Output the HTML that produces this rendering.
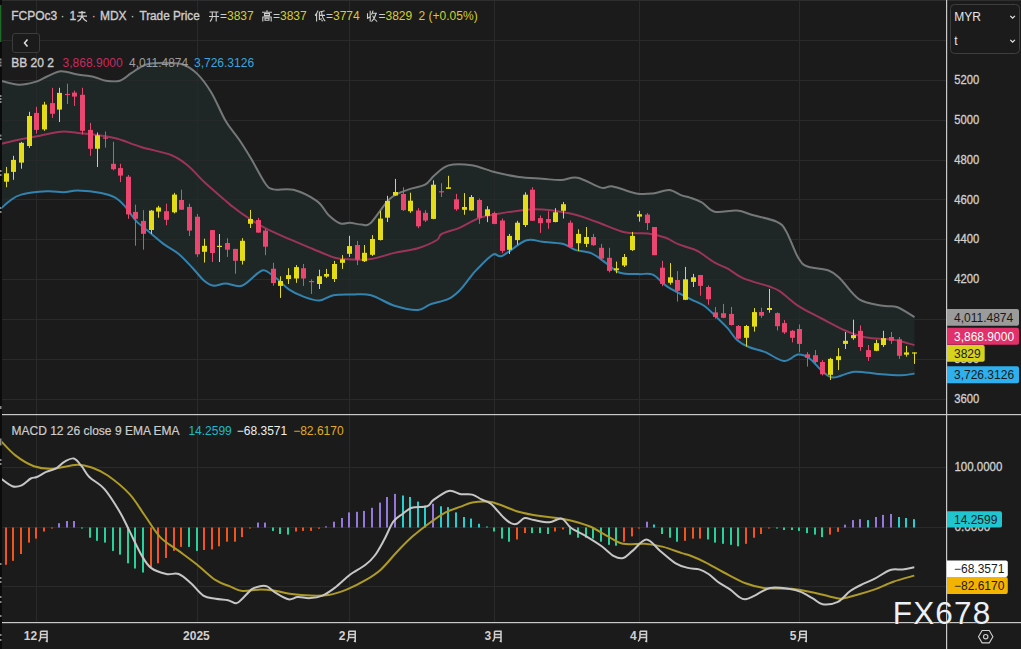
<!DOCTYPE html>
<html><head><meta charset="utf-8"><style>
html,body{margin:0;padding:0;background:#1b1b1b;width:1021px;height:649px;overflow:hidden;}
svg{display:block;}
</style></head><body>
<svg width="1021" height="649" viewBox="0 0 1021 649">
<rect width="1021" height="649" fill="#1b1b1b"/>
<g stroke="#2a2a2a" stroke-width="1"><line x1="0" y1="40.5" x2="946" y2="40.5"/><line x1="0" y1="80.5" x2="946" y2="80.5"/><line x1="0" y1="120.5" x2="946" y2="120.5"/><line x1="0" y1="160.5" x2="946" y2="160.5"/><line x1="0" y1="199.5" x2="946" y2="199.5"/><line x1="0" y1="239.5" x2="946" y2="239.5"/><line x1="0" y1="279.5" x2="946" y2="279.5"/><line x1="0" y1="319.5" x2="946" y2="319.5"/><line x1="0" y1="359.5" x2="946" y2="359.5"/><line x1="0" y1="399.5" x2="946" y2="399.5"/><line x1="0" y1="467.5" x2="946" y2="467.5"/><line x1="0" y1="527.5" x2="946" y2="527.5"/><line x1="0" y1="586.5" x2="946" y2="586.5"/><line x1="36.5" y1="0" x2="36.5" y2="622"/><line x1="197.5" y1="0" x2="197.5" y2="622"/><line x1="349.5" y1="0" x2="349.5" y2="622"/><line x1="494.5" y1="0" x2="494.5" y2="622"/><line x1="639.5" y1="0" x2="639.5" y2="622"/><line x1="799.5" y1="0" x2="799.5" y2="622"/></g>
<path d="M0.0 81.0 C0.4 81.0 -0.7 80.6 2.4 81.2 C5.5 81.8 13.3 84.6 18.8 84.7 C24.3 84.8 30.6 83.3 35.3 81.9 C40.0 80.5 42.7 78.3 47.0 76.5 C51.3 74.7 56.0 71.6 61.1 71.3 C66.2 71.0 72.1 73.7 77.6 74.6 C83.1 75.5 89.3 75.9 94.0 76.9 C98.7 77.9 101.5 80.1 105.8 80.7 C110.1 81.3 115.6 82.0 119.9 80.7 C124.2 79.4 127.3 75.6 131.6 72.9 C135.9 70.2 140.2 66.4 145.7 64.7 C151.2 63.0 158.2 62.8 164.5 62.8 C170.8 62.8 177.9 62.8 183.4 64.7 C188.9 66.6 192.8 69.4 197.5 74.1 C202.2 78.8 206.9 85.1 211.6 92.9 C216.3 100.7 221.1 113.2 225.7 121.1 C230.3 128.9 235.2 133.7 239.4 140.0 C243.7 146.3 246.9 151.6 251.2 158.8 C255.5 166.1 261.6 178.4 265.3 183.5 C269.0 188.6 268.8 188.3 273.5 189.4 C278.2 190.5 286.2 187.9 293.5 189.8 C300.8 191.8 311.1 196.9 317.0 201.1 C322.9 205.3 324.8 211.5 328.7 215.2 C332.6 218.9 337.0 222.2 340.5 223.5 C344.0 224.8 346.4 222.5 349.9 222.7 C353.4 222.9 358.1 224.6 361.6 224.6 C365.1 224.6 366.3 227.0 371.0 222.7 C375.7 218.4 383.6 204.4 389.9 198.8 C396.2 193.2 402.8 191.8 408.7 189.4 C414.6 187.1 420.8 187.0 425.1 184.7 C429.4 182.3 430.6 178.5 434.5 175.3 C438.4 172.1 442.4 167.1 448.6 165.4 C454.8 163.7 464.0 164.2 471.8 165.3 C479.6 166.5 487.5 170.4 495.3 172.3 C503.1 174.2 511.0 175.9 518.8 177.0 C526.6 178.1 535.2 178.2 542.3 178.7 C549.3 179.2 555.2 180.3 561.1 180.1 C567.0 179.9 570.9 176.4 577.5 177.7 C584.1 178.9 595.1 186.1 601.0 187.6 C606.9 189.1 606.9 185.4 612.8 186.4 C618.7 187.4 629.6 192.3 636.3 193.5 C643.0 194.7 647.3 194.1 652.8 193.5 C658.3 192.9 664.5 189.7 669.2 190.0 C673.9 190.3 677.5 193.8 681.0 195.1 C684.5 196.4 686.5 196.4 690.0 197.6 C693.5 198.8 697.7 200.0 701.8 202.3 C705.9 204.7 708.8 210.3 714.7 211.7 C720.6 213.1 730.5 210.0 737.0 210.6 C743.5 211.2 746.8 213.4 753.5 215.3 C760.2 217.2 771.5 219.1 777.0 221.8 C782.5 224.5 782.9 225.7 786.4 231.7 C789.9 237.7 794.6 251.8 798.1 257.6 C801.6 263.4 802.4 264.4 807.5 266.5 C812.6 268.6 823.2 268.4 828.7 270.5 C834.2 272.6 835.3 274.2 840.4 279.0 C845.5 283.8 852.2 294.9 859.3 299.4 C866.4 303.9 876.5 304.5 882.8 305.8 C889.1 307.1 891.6 305.1 896.9 307.0 C902.2 308.9 911.6 315.4 914.5 317.1 L914.5 373.5 C912.4 373.8 907.7 375.1 901.6 375.2 C895.5 375.3 886.0 374.6 878.1 374.0 C870.2 373.4 862.0 371.1 854.5 371.7 C847.0 372.3 838.9 377.7 833.4 377.5 C827.9 377.3 825.5 373.6 821.6 370.5 C817.7 367.4 813.8 361.4 809.9 358.7 C806.0 356.0 802.4 354.1 798.1 354.5 C793.8 354.9 789.5 361.5 784.0 361.1 C778.5 360.7 771.1 354.5 765.2 352.1 C759.3 349.8 753.5 349.0 748.8 347.0 C744.1 345.0 740.5 343.0 737.0 339.9 C733.5 336.8 730.7 331.7 727.6 328.2 C724.5 324.7 722.1 322.5 718.2 318.8 C714.3 315.1 708.8 309.1 704.1 305.8 C699.4 302.5 696.2 302.1 690.0 298.8 C683.8 295.6 673.1 290.3 666.9 286.3 C660.7 282.3 657.5 276.6 652.8 274.6 C648.1 272.6 644.2 274.4 638.7 274.1 C633.2 273.8 625.4 274.6 619.9 272.7 C614.4 270.8 610.4 266.0 605.7 262.8 C601.0 259.6 596.7 255.6 591.6 253.4 C586.5 251.2 579.9 251.5 575.2 249.9 C570.5 248.3 568.9 245.4 563.4 244.0 C557.9 242.6 548.6 242.3 542.3 241.7 C536.0 241.1 532.5 238.2 525.8 240.5 C519.1 242.8 507.8 253.5 502.3 255.8 C496.8 258.2 497.2 252.2 492.9 254.6 C488.6 256.9 480.3 266.1 476.5 269.9 C472.7 273.7 472.8 274.2 470.0 277.6 C467.2 281.0 463.6 286.5 460.0 290.0 C456.4 293.5 453.6 296.4 448.6 298.8 C443.6 301.2 434.9 302.7 429.8 304.6 C424.7 306.5 423.9 309.8 418.0 310.0 C412.1 310.2 402.3 308.3 394.5 305.8 C386.7 303.3 378.1 297.1 371.0 295.2 C363.9 293.3 358.5 294.5 352.2 294.5 C345.9 294.5 338.9 294.2 333.4 295.2 C327.9 296.2 324.4 300.4 319.3 300.6 C314.2 300.8 308.0 298.3 302.9 296.4 C297.8 294.5 293.1 292.3 288.8 289.4 C284.5 286.5 280.9 281.9 277.0 278.8 C273.1 275.7 268.4 271.6 265.3 270.6 C262.2 269.6 262.1 270.4 258.2 272.9 C254.3 275.4 247.2 284.1 241.8 285.8 C236.4 287.6 230.3 283.4 225.7 283.4 C221.0 283.4 217.4 286.2 213.9 285.8 C210.4 285.4 208.0 284.0 204.5 281.1 C201.0 278.2 197.1 272.7 192.8 268.2 C188.5 263.7 183.4 257.9 178.7 254.0 C174.0 250.1 169.2 248.1 164.5 244.6 C159.8 241.1 155.1 236.8 150.4 232.9 C145.7 229.0 140.6 225.6 136.3 221.1 C132.0 216.6 128.1 209.8 124.6 205.9 C121.1 202.0 119.1 199.8 115.2 197.6 C111.3 195.4 107.4 194.1 101.1 192.9 C94.8 191.7 83.9 190.7 77.6 190.6 C71.3 190.5 68.6 192.1 63.5 192.2 C58.4 192.3 54.0 190.9 47.0 191.3 C40.0 191.7 27.5 192.9 21.2 194.6 C14.9 196.2 12.9 198.7 9.4 201.2 C5.9 203.7 1.6 208.0 0.0 209.4 Z" fill="#1e2828" fill-opacity="0.85"/>
<g stroke="#2a2a2a" stroke-width="1" opacity="0.6"><line x1="0" y1="40.5" x2="946" y2="40.5"/><line x1="0" y1="80.5" x2="946" y2="80.5"/><line x1="0" y1="120.5" x2="946" y2="120.5"/><line x1="0" y1="160.5" x2="946" y2="160.5"/><line x1="0" y1="199.5" x2="946" y2="199.5"/><line x1="0" y1="239.5" x2="946" y2="239.5"/><line x1="0" y1="279.5" x2="946" y2="279.5"/><line x1="0" y1="319.5" x2="946" y2="319.5"/><line x1="0" y1="359.5" x2="946" y2="359.5"/><line x1="0" y1="399.5" x2="946" y2="399.5"/><line x1="0" y1="467.5" x2="946" y2="467.5"/><line x1="0" y1="527.5" x2="946" y2="527.5"/><line x1="0" y1="586.5" x2="946" y2="586.5"/><line x1="36.5" y1="0" x2="36.5" y2="622"/><line x1="197.5" y1="0" x2="197.5" y2="622"/><line x1="349.5" y1="0" x2="349.5" y2="622"/><line x1="494.5" y1="0" x2="494.5" y2="622"/><line x1="639.5" y1="0" x2="639.5" y2="622"/><line x1="799.5" y1="0" x2="799.5" y2="622"/></g>
<path d="M0.0 81.0 C0.4 81.0 -0.7 80.6 2.4 81.2 C5.5 81.8 13.3 84.6 18.8 84.7 C24.3 84.8 30.6 83.3 35.3 81.9 C40.0 80.5 42.7 78.3 47.0 76.5 C51.3 74.7 56.0 71.6 61.1 71.3 C66.2 71.0 72.1 73.7 77.6 74.6 C83.1 75.5 89.3 75.9 94.0 76.9 C98.7 77.9 101.5 80.1 105.8 80.7 C110.1 81.3 115.6 82.0 119.9 80.7 C124.2 79.4 127.3 75.6 131.6 72.9 C135.9 70.2 140.2 66.4 145.7 64.7 C151.2 63.0 158.2 62.8 164.5 62.8 C170.8 62.8 177.9 62.8 183.4 64.7 C188.9 66.6 192.8 69.4 197.5 74.1 C202.2 78.8 206.9 85.1 211.6 92.9 C216.3 100.7 221.1 113.2 225.7 121.1 C230.3 128.9 235.2 133.7 239.4 140.0 C243.7 146.3 246.9 151.6 251.2 158.8 C255.5 166.1 261.6 178.4 265.3 183.5 C269.0 188.6 268.8 188.3 273.5 189.4 C278.2 190.5 286.2 187.9 293.5 189.8 C300.8 191.8 311.1 196.9 317.0 201.1 C322.9 205.3 324.8 211.5 328.7 215.2 C332.6 218.9 337.0 222.2 340.5 223.5 C344.0 224.8 346.4 222.5 349.9 222.7 C353.4 222.9 358.1 224.6 361.6 224.6 C365.1 224.6 366.3 227.0 371.0 222.7 C375.7 218.4 383.6 204.4 389.9 198.8 C396.2 193.2 402.8 191.8 408.7 189.4 C414.6 187.1 420.8 187.0 425.1 184.7 C429.4 182.3 430.6 178.5 434.5 175.3 C438.4 172.1 442.4 167.1 448.6 165.4 C454.8 163.7 464.0 164.2 471.8 165.3 C479.6 166.5 487.5 170.4 495.3 172.3 C503.1 174.2 511.0 175.9 518.8 177.0 C526.6 178.1 535.2 178.2 542.3 178.7 C549.3 179.2 555.2 180.3 561.1 180.1 C567.0 179.9 570.9 176.4 577.5 177.7 C584.1 178.9 595.1 186.1 601.0 187.6 C606.9 189.1 606.9 185.4 612.8 186.4 C618.7 187.4 629.6 192.3 636.3 193.5 C643.0 194.7 647.3 194.1 652.8 193.5 C658.3 192.9 664.5 189.7 669.2 190.0 C673.9 190.3 677.5 193.8 681.0 195.1 C684.5 196.4 686.5 196.4 690.0 197.6 C693.5 198.8 697.7 200.0 701.8 202.3 C705.9 204.7 708.8 210.3 714.7 211.7 C720.6 213.1 730.5 210.0 737.0 210.6 C743.5 211.2 746.8 213.4 753.5 215.3 C760.2 217.2 771.5 219.1 777.0 221.8 C782.5 224.5 782.9 225.7 786.4 231.7 C789.9 237.7 794.6 251.8 798.1 257.6 C801.6 263.4 802.4 264.4 807.5 266.5 C812.6 268.6 823.2 268.4 828.7 270.5 C834.2 272.6 835.3 274.2 840.4 279.0 C845.5 283.8 852.2 294.9 859.3 299.4 C866.4 303.9 876.5 304.5 882.8 305.8 C889.1 307.1 891.6 305.1 896.9 307.0 C902.2 308.9 911.6 315.4 914.5 317.1" fill="none" stroke="#747878" stroke-width="2" stroke-linejoin="round"/>
<path d="M0.0 144.0 C3.9 143.1 16.8 140.1 23.5 138.7 C30.2 137.3 33.7 136.9 40.0 135.7 C46.3 134.5 54.8 132.2 61.1 131.7 C67.4 131.2 71.3 132.3 77.6 132.9 C83.9 133.5 92.0 134.2 98.7 135.2 C105.4 136.2 110.5 136.7 117.5 138.7 C124.5 140.7 132.0 144.2 141.0 147.0 C150.0 149.8 163.8 152.1 171.6 155.2 C179.4 158.3 182.5 161.3 188.0 165.8 C193.5 170.3 198.6 176.7 204.5 182.2 C210.4 187.7 219.1 195.0 223.3 198.7 C227.6 202.4 226.5 201.8 230.0 204.6 C233.5 207.3 238.2 211.3 244.1 215.2 C250.0 219.1 257.9 224.2 265.3 228.2 C272.8 232.1 281.0 235.5 288.8 238.9 C296.6 242.3 304.5 245.5 312.3 248.7 C320.1 251.9 329.2 256.2 335.8 258.0 C342.4 259.8 346.3 259.2 352.2 259.4 C358.1 259.6 363.9 260.1 371.0 259.0 C378.1 257.9 386.7 254.7 394.5 252.9 C402.3 251.1 410.9 250.3 418.0 248.2 C425.1 246.0 433.0 242.4 436.9 240.0 C440.8 237.6 437.8 236.1 441.6 234.0 C445.5 231.9 453.8 230.2 460.0 227.6 C466.2 225.0 472.1 220.5 478.8 218.2 C485.5 215.8 490.6 215.0 500.0 213.5 C509.4 212.0 523.5 209.2 535.2 209.2 C547.0 209.2 560.3 211.4 570.5 213.5 C580.7 215.6 587.3 218.6 596.3 221.7 C605.3 224.8 616.0 230.3 624.6 232.3 C633.2 234.3 641.2 232.6 648.1 233.5 C655.0 234.4 660.8 236.0 665.8 237.8 C670.8 239.6 673.5 242.3 678.1 244.2 C682.7 246.1 690.0 247.9 693.6 249.3 C697.2 250.7 696.5 250.3 700.0 252.5 C703.5 254.7 710.2 260.0 714.8 262.7 C719.4 265.4 723.0 266.1 727.8 268.7 C732.6 271.3 736.7 275.5 743.5 278.4 C750.3 281.3 762.4 284.1 768.5 286.3 C774.6 288.5 775.1 288.1 780.0 291.3 C784.9 294.6 791.2 301.3 798.1 305.8 C805.0 310.3 813.8 314.4 821.6 318.5 C829.4 322.6 837.7 327.3 845.1 330.5 C852.5 333.7 858.4 336.1 866.3 337.6 C874.1 339.1 884.2 338.2 892.2 339.5 C900.2 340.8 910.8 344.2 914.5 345.1" fill="none" stroke="#9c3359" stroke-width="2" stroke-linejoin="round"/>
<path d="M0.0 209.4 C1.6 208.0 5.9 203.7 9.4 201.2 C12.9 198.7 14.9 196.2 21.2 194.6 C27.5 192.9 40.0 191.7 47.0 191.3 C54.0 190.9 58.4 192.3 63.5 192.2 C68.6 192.1 71.3 190.5 77.6 190.6 C83.9 190.7 94.8 191.7 101.1 192.9 C107.4 194.1 111.3 195.4 115.2 197.6 C119.1 199.8 121.1 202.0 124.6 205.9 C128.1 209.8 132.0 216.6 136.3 221.1 C140.6 225.6 145.7 229.0 150.4 232.9 C155.1 236.8 159.8 241.1 164.5 244.6 C169.2 248.1 174.0 250.1 178.7 254.0 C183.4 257.9 188.5 263.7 192.8 268.2 C197.1 272.7 201.0 278.2 204.5 281.1 C208.0 284.0 210.4 285.4 213.9 285.8 C217.4 286.2 221.0 283.4 225.7 283.4 C230.3 283.4 236.4 287.6 241.8 285.8 C247.2 284.1 254.3 275.4 258.2 272.9 C262.1 270.4 262.2 269.6 265.3 270.6 C268.4 271.6 273.1 275.7 277.0 278.8 C280.9 281.9 284.5 286.5 288.8 289.4 C293.1 292.3 297.8 294.5 302.9 296.4 C308.0 298.3 314.2 300.8 319.3 300.6 C324.4 300.4 327.9 296.2 333.4 295.2 C338.9 294.2 345.9 294.5 352.2 294.5 C358.5 294.5 363.9 293.3 371.0 295.2 C378.1 297.1 386.7 303.3 394.5 305.8 C402.3 308.3 412.1 310.2 418.0 310.0 C423.9 309.8 424.7 306.5 429.8 304.6 C434.9 302.7 443.6 301.2 448.6 298.8 C453.6 296.4 456.4 293.5 460.0 290.0 C463.6 286.5 467.2 281.0 470.0 277.6 C472.8 274.2 472.7 273.7 476.5 269.9 C480.3 266.1 488.6 256.9 492.9 254.6 C497.2 252.2 496.8 258.2 502.3 255.8 C507.8 253.5 519.1 242.8 525.8 240.5 C532.5 238.2 536.0 241.1 542.3 241.7 C548.6 242.3 557.9 242.6 563.4 244.0 C568.9 245.4 570.5 248.3 575.2 249.9 C579.9 251.5 586.5 251.2 591.6 253.4 C596.7 255.6 601.0 259.6 605.7 262.8 C610.4 266.0 614.4 270.8 619.9 272.7 C625.4 274.6 633.2 273.8 638.7 274.1 C644.2 274.4 648.1 272.6 652.8 274.6 C657.5 276.6 660.7 282.3 666.9 286.3 C673.1 290.3 683.8 295.6 690.0 298.8 C696.2 302.1 699.4 302.5 704.1 305.8 C708.8 309.1 714.3 315.1 718.2 318.8 C722.1 322.5 724.5 324.7 727.6 328.2 C730.7 331.7 733.5 336.8 737.0 339.9 C740.5 343.0 744.1 345.0 748.8 347.0 C753.5 349.0 759.3 349.8 765.2 352.1 C771.1 354.5 778.5 360.7 784.0 361.1 C789.5 361.5 793.8 354.9 798.1 354.5 C802.4 354.1 806.0 356.0 809.9 358.7 C813.8 361.4 817.7 367.4 821.6 370.5 C825.5 373.6 827.9 377.3 833.4 377.5 C838.9 377.7 847.0 372.3 854.5 371.7 C862.0 371.1 870.2 373.4 878.1 374.0 C886.0 374.6 895.5 375.3 901.6 375.2 C907.7 375.1 912.4 373.8 914.5 373.5" fill="none" stroke="#3283b0" stroke-width="2" stroke-linejoin="round"/>
<g><rect x="6" y="166.9" width="1" height="20.3" fill="#e3dc17"/><rect x="4" y="173.3" width="5" height="8.4" fill="#e3dc17"/><rect x="13" y="155.8" width="1" height="24.0" fill="#e3dc17"/><rect x="11" y="159.9" width="5" height="12.0" fill="#e3dc17"/><rect x="21" y="141.9" width="1" height="26.8" fill="#e3dc17"/><rect x="19" y="142.8" width="5" height="19.8" fill="#e3dc17"/><rect x="29" y="111.8" width="1" height="36.0" fill="#e3dc17"/><rect x="27" y="116.0" width="5" height="30.0" fill="#e3dc17"/><rect x="36" y="106.8" width="1" height="26.8" fill="#ea4670"/><rect x="34" y="112.9" width="5" height="17.0" fill="#ea4670"/><rect x="44" y="101.8" width="1" height="29.0" fill="#e3dc17"/><rect x="42" y="104.6" width="5" height="24.8" fill="#e3dc17"/><rect x="52" y="87.8" width="1" height="30.1" fill="#ea4670"/><rect x="50" y="103.1" width="5" height="10.7" fill="#ea4670"/><rect x="59" y="87.8" width="1" height="34.2" fill="#e3dc17"/><rect x="57" y="92.9" width="5" height="16.7" fill="#e3dc17"/><rect x="67" y="83.7" width="1" height="20.3" fill="#ea4670"/><rect x="65" y="93.9" width="5" height="1.2" fill="#ea4670"/><rect x="74" y="90.7" width="1" height="15.2" fill="#ea4670"/><rect x="72" y="92.6" width="5" height="4.0" fill="#ea4670"/><rect x="82" y="87.8" width="1" height="46.7" fill="#ea4670"/><rect x="80" y="94.8" width="5" height="36.0" fill="#ea4670"/><rect x="90" y="122.9" width="1" height="32.9" fill="#ea4670"/><rect x="88" y="129.9" width="5" height="18.9" fill="#ea4670"/><rect x="97" y="132.5" width="1" height="34.5" fill="#e3dc17"/><rect x="95" y="135.3" width="5" height="13.4" fill="#e3dc17"/><rect x="105" y="131.5" width="1" height="16.1" fill="#ea4670"/><rect x="103" y="137.5" width="5" height="1.2" fill="#ea4670"/><rect x="113" y="141.8" width="1" height="28.5" fill="#ea4670"/><rect x="111" y="163.8" width="5" height="5.4" fill="#ea4670"/><rect x="120" y="163.8" width="1" height="18.3" fill="#ea4670"/><rect x="118" y="168.1" width="5" height="7.5" fill="#ea4670"/><rect x="128" y="175.0" width="1" height="43.8" fill="#ea4670"/><rect x="126" y="176.7" width="5" height="37.7" fill="#ea4670"/><rect x="135" y="204.7" width="1" height="41.0" fill="#ea4670"/><rect x="133" y="211.9" width="5" height="6.9" fill="#ea4670"/><rect x="143" y="210.1" width="1" height="39.5" fill="#ea4670"/><rect x="141" y="220.9" width="5" height="12.9" fill="#ea4670"/><rect x="151" y="210.1" width="1" height="23.7" fill="#e3dc17"/><rect x="149" y="210.6" width="5" height="19.4" fill="#e3dc17"/><rect x="158" y="205.8" width="1" height="11.9" fill="#e3dc17"/><rect x="156" y="207.5" width="5" height="4.1" fill="#e3dc17"/><rect x="166" y="203.7" width="1" height="21.5" fill="#ea4670"/><rect x="164" y="211.2" width="5" height="8.6" fill="#ea4670"/><rect x="174" y="192.9" width="1" height="20.5" fill="#e3dc17"/><rect x="172" y="194.6" width="5" height="17.7" fill="#e3dc17"/><rect x="181" y="189.7" width="1" height="20.0" fill="#ea4670"/><rect x="179" y="200.0" width="5" height="9.7" fill="#ea4670"/><rect x="189" y="203.7" width="1" height="32.3" fill="#ea4670"/><rect x="187" y="206.9" width="5" height="23.7" fill="#ea4670"/><rect x="197" y="214.0" width="1" height="42.9" fill="#ea4670"/><rect x="195" y="216.7" width="5" height="37.6" fill="#ea4670"/><rect x="204" y="238.7" width="1" height="23.8" fill="#e3dc17"/><rect x="202" y="245.8" width="5" height="6.0" fill="#e3dc17"/><rect x="212" y="230.1" width="1" height="31.9" fill="#ea4670"/><rect x="210" y="230.1" width="5" height="22.9" fill="#ea4670"/><rect x="219" y="234.0" width="1" height="28.0" fill="#e3dc17"/><rect x="217" y="245.8" width="5" height="1.2" fill="#e3dc17"/><rect x="227" y="238.2" width="1" height="18.7" fill="#ea4670"/><rect x="225" y="243.0" width="5" height="6.7" fill="#ea4670"/><rect x="235" y="248.9" width="1" height="24.9" fill="#ea4670"/><rect x="233" y="248.9" width="5" height="11.9" fill="#ea4670"/><rect x="242" y="238.2" width="1" height="26.3" fill="#e3dc17"/><rect x="240" y="240.8" width="5" height="20.0" fill="#e3dc17"/><rect x="250" y="209.9" width="1" height="18.1" fill="#e3dc17"/><rect x="248" y="219.0" width="5" height="4.8" fill="#e3dc17"/><rect x="258" y="217.9" width="1" height="14.7" fill="#ea4670"/><rect x="256" y="220.0" width="5" height="12.6" fill="#ea4670"/><rect x="265" y="228.9" width="1" height="26.3" fill="#ea4670"/><rect x="263" y="230.6" width="5" height="16.1" fill="#ea4670"/><rect x="273" y="262.8" width="1" height="22.9" fill="#ea4670"/><rect x="271" y="268.7" width="5" height="14.4" fill="#ea4670"/><rect x="280" y="276.3" width="1" height="21.6" fill="#e3dc17"/><rect x="278" y="281.0" width="5" height="4.9" fill="#e3dc17"/><rect x="288" y="268.2" width="1" height="15.8" fill="#e3dc17"/><rect x="286" y="275.1" width="5" height="3.9" fill="#e3dc17"/><rect x="296" y="265.1" width="1" height="17.7" fill="#e3dc17"/><rect x="294" y="267.1" width="5" height="11.4" fill="#e3dc17"/><rect x="303" y="264.0" width="1" height="21.9" fill="#ea4670"/><rect x="301" y="268.2" width="5" height="10.3" fill="#ea4670"/><rect x="311" y="279.4" width="1" height="14.5" fill="#ea4670"/><rect x="309" y="281.0" width="5" height="1.2" fill="#ea4670"/><rect x="319" y="269.7" width="1" height="19.3" fill="#e3dc17"/><rect x="317" y="276.2" width="5" height="7.8" fill="#e3dc17"/><rect x="326" y="268.9" width="1" height="9.0" fill="#e3dc17"/><rect x="324" y="274.0" width="5" height="2.6" fill="#e3dc17"/><rect x="334" y="260.9" width="1" height="21.1" fill="#e3dc17"/><rect x="332" y="264.0" width="5" height="15.0" fill="#e3dc17"/><rect x="342" y="255.1" width="1" height="13.8" fill="#e3dc17"/><rect x="340" y="259.4" width="5" height="3.4" fill="#e3dc17"/><rect x="349" y="235.8" width="1" height="21.1" fill="#e3dc17"/><rect x="347" y="246.1" width="5" height="7.7" fill="#e3dc17"/><rect x="357" y="240.9" width="1" height="24.2" fill="#ea4670"/><rect x="355" y="245.0" width="5" height="14.7" fill="#ea4670"/><rect x="364" y="245.0" width="1" height="17.0" fill="#e3dc17"/><rect x="362" y="252.8" width="5" height="8.4" fill="#e3dc17"/><rect x="372" y="235.1" width="1" height="20.8" fill="#e3dc17"/><rect x="370" y="239.0" width="5" height="15.8" fill="#e3dc17"/><rect x="380" y="210.9" width="1" height="29.6" fill="#e3dc17"/><rect x="378" y="218.6" width="5" height="21.4" fill="#e3dc17"/><rect x="387" y="195.8" width="1" height="26.2" fill="#e3dc17"/><rect x="385" y="200.9" width="5" height="16.8" fill="#e3dc17"/><rect x="395" y="178.9" width="1" height="16.6" fill="#e3dc17"/><rect x="393" y="192.0" width="5" height="3.5" fill="#e3dc17"/><rect x="403" y="187.3" width="1" height="23.6" fill="#ea4670"/><rect x="401" y="194.0" width="5" height="16.1" fill="#ea4670"/><rect x="410" y="192.7" width="1" height="20.1" fill="#e3dc17"/><rect x="408" y="200.7" width="5" height="10.5" fill="#e3dc17"/><rect x="418" y="208.1" width="1" height="20.1" fill="#ea4670"/><rect x="416" y="210.5" width="5" height="15.8" fill="#ea4670"/><rect x="425" y="210.1" width="1" height="11.9" fill="#ea4670"/><rect x="423" y="212.8" width="5" height="7.7" fill="#ea4670"/><rect x="433" y="180.4" width="1" height="38.8" fill="#e3dc17"/><rect x="431" y="184.7" width="5" height="34.2" fill="#e3dc17"/><rect x="441" y="183.2" width="1" height="13.8" fill="#ea4670"/><rect x="439" y="191.2" width="5" height="1.2" fill="#ea4670"/><rect x="448" y="175.8" width="1" height="13.1" fill="#e3dc17"/><rect x="446" y="187.3" width="5" height="1.6" fill="#e3dc17"/><rect x="456" y="193.9" width="1" height="16.9" fill="#ea4670"/><rect x="454" y="199.3" width="5" height="10.0" fill="#ea4670"/><rect x="464" y="193.1" width="1" height="21.6" fill="#e3dc17"/><rect x="462" y="207.0" width="5" height="2.8" fill="#e3dc17"/><rect x="471" y="195.0" width="1" height="15.8" fill="#e3dc17"/><rect x="469" y="197.0" width="5" height="13.4" fill="#e3dc17"/><rect x="479" y="198.5" width="1" height="25.4" fill="#ea4670"/><rect x="477" y="200.0" width="5" height="17.8" fill="#ea4670"/><rect x="487" y="206.2" width="1" height="15.9" fill="#e3dc17"/><rect x="485" y="209.3" width="5" height="6.6" fill="#e3dc17"/><rect x="494" y="211.6" width="1" height="12.6" fill="#ea4670"/><rect x="492" y="213.1" width="5" height="10.8" fill="#ea4670"/><rect x="502" y="218.5" width="1" height="34.7" fill="#ea4670"/><rect x="500" y="220.5" width="5" height="30.4" fill="#ea4670"/><rect x="509" y="233.9" width="1" height="20.1" fill="#e3dc17"/><rect x="507" y="235.9" width="5" height="13.9" fill="#e3dc17"/><rect x="517" y="220.8" width="1" height="23.9" fill="#e3dc17"/><rect x="515" y="222.7" width="5" height="17.4" fill="#e3dc17"/><rect x="525" y="192.3" width="1" height="34.7" fill="#e3dc17"/><rect x="523" y="194.7" width="5" height="30.3" fill="#e3dc17"/><rect x="532" y="187.3" width="1" height="33.5" fill="#ea4670"/><rect x="530" y="189.7" width="5" height="31.1" fill="#ea4670"/><rect x="540" y="215.5" width="1" height="17.4" fill="#ea4670"/><rect x="538" y="218.1" width="5" height="5.1" fill="#ea4670"/><rect x="548" y="211.3" width="1" height="17.5" fill="#ea4670"/><rect x="546" y="219.0" width="5" height="3.7" fill="#ea4670"/><rect x="555" y="208.2" width="1" height="14.2" fill="#e3dc17"/><rect x="553" y="212.3" width="5" height="9.7" fill="#e3dc17"/><rect x="563" y="202.0" width="1" height="16.5" fill="#e3dc17"/><rect x="561" y="204.2" width="5" height="6.6" fill="#e3dc17"/><rect x="570" y="220.5" width="1" height="27.3" fill="#ea4670"/><rect x="568" y="222.7" width="5" height="24.3" fill="#ea4670"/><rect x="578" y="229.3" width="1" height="21.6" fill="#e3dc17"/><rect x="576" y="233.9" width="5" height="9.3" fill="#e3dc17"/><rect x="586" y="227.0" width="1" height="20.0" fill="#e3dc17"/><rect x="584" y="237.0" width="5" height="6.9" fill="#e3dc17"/><rect x="593" y="233.9" width="1" height="11.9" fill="#ea4670"/><rect x="591" y="237.0" width="5" height="8.2" fill="#ea4670"/><rect x="601" y="243.9" width="1" height="16.2" fill="#ea4670"/><rect x="599" y="247.8" width="5" height="10.8" fill="#ea4670"/><rect x="609" y="247.8" width="1" height="24.6" fill="#ea4670"/><rect x="607" y="257.8" width="5" height="13.1" fill="#ea4670"/><rect x="616" y="261.6" width="1" height="11.6" fill="#e3dc17"/><rect x="614" y="268.3" width="5" height="1.8" fill="#e3dc17"/><rect x="624" y="254.0" width="1" height="13.0" fill="#e3dc17"/><rect x="622" y="257.0" width="5" height="8.5" fill="#e3dc17"/><rect x="632" y="231.9" width="1" height="19.0" fill="#e3dc17"/><rect x="630" y="235.9" width="5" height="14.2" fill="#e3dc17"/><rect x="639" y="210.8" width="1" height="10.8" fill="#e3dc17"/><rect x="637" y="214.2" width="5" height="2.4" fill="#e3dc17"/><rect x="647" y="213.1" width="1" height="16.9" fill="#ea4670"/><rect x="645" y="214.6" width="5" height="8.5" fill="#ea4670"/><rect x="654" y="227.0" width="1" height="28.2" fill="#ea4670"/><rect x="652" y="227.0" width="5" height="28.2" fill="#ea4670"/><rect x="662" y="260.8" width="1" height="25.4" fill="#ea4670"/><rect x="660" y="267.7" width="5" height="16.2" fill="#ea4670"/><rect x="670" y="263.1" width="1" height="21.6" fill="#e3dc17"/><rect x="668" y="277.3" width="5" height="5.5" fill="#e3dc17"/><rect x="677" y="271.1" width="1" height="30.5" fill="#ea4670"/><rect x="675" y="280.0" width="5" height="10.8" fill="#ea4670"/><rect x="685" y="266.9" width="1" height="33.2" fill="#e3dc17"/><rect x="683" y="279.3" width="5" height="20.5" fill="#e3dc17"/><rect x="693" y="273.9" width="1" height="13.1" fill="#e3dc17"/><rect x="691" y="277.3" width="5" height="4.6" fill="#e3dc17"/><rect x="700" y="275.0" width="1" height="20.7" fill="#ea4670"/><rect x="698" y="275.0" width="5" height="10.9" fill="#ea4670"/><rect x="708" y="285.4" width="1" height="19.3" fill="#ea4670"/><rect x="706" y="287.0" width="5" height="12.3" fill="#ea4670"/><rect x="715" y="307.0" width="1" height="11.6" fill="#ea4670"/><rect x="713" y="312.4" width="5" height="4.6" fill="#ea4670"/><rect x="723" y="303.9" width="1" height="14.3" fill="#ea4670"/><rect x="721" y="313.2" width="5" height="4.6" fill="#ea4670"/><rect x="731" y="307.0" width="1" height="18.5" fill="#ea4670"/><rect x="729" y="313.9" width="5" height="11.1" fill="#ea4670"/><rect x="738" y="325.0" width="1" height="14.4" fill="#ea4670"/><rect x="736" y="326.0" width="5" height="12.6" fill="#ea4670"/><rect x="746" y="325.0" width="1" height="21.6" fill="#e3dc17"/><rect x="744" y="326.0" width="5" height="11.8" fill="#e3dc17"/><rect x="754" y="308.1" width="1" height="23.5" fill="#e3dc17"/><rect x="752" y="312.1" width="5" height="14.5" fill="#e3dc17"/><rect x="761" y="307.7" width="1" height="10.1" fill="#ea4670"/><rect x="759" y="312.0" width="5" height="3.7" fill="#ea4670"/><rect x="769" y="288.9" width="1" height="23.8" fill="#e3dc17"/><rect x="767" y="308.0" width="5" height="2.0" fill="#e3dc17"/><rect x="777" y="312.4" width="1" height="18.1" fill="#ea4670"/><rect x="775" y="313.1" width="5" height="13.1" fill="#ea4670"/><rect x="784" y="320.1" width="1" height="13.8" fill="#ea4670"/><rect x="782" y="323.1" width="5" height="9.3" fill="#ea4670"/><rect x="792" y="330.0" width="1" height="12.4" fill="#ea4670"/><rect x="790" y="330.8" width="5" height="7.0" fill="#ea4670"/><rect x="799" y="324.4" width="1" height="28.0" fill="#ea4670"/><rect x="797" y="329.0" width="5" height="14.9" fill="#ea4670"/><rect x="807" y="352.1" width="1" height="14.5" fill="#ea4670"/><rect x="805" y="354.3" width="5" height="3.5" fill="#ea4670"/><rect x="815" y="350.1" width="1" height="13.1" fill="#ea4670"/><rect x="813" y="355.2" width="5" height="6.8" fill="#ea4670"/><rect x="822" y="360.1" width="1" height="15.4" fill="#ea4670"/><rect x="820" y="362.0" width="5" height="12.3" fill="#ea4670"/><rect x="830" y="357.8" width="1" height="22.2" fill="#e3dc17"/><rect x="828" y="358.9" width="5" height="15.9" fill="#e3dc17"/><rect x="838" y="348.1" width="1" height="22.0" fill="#e3dc17"/><rect x="836" y="356.2" width="5" height="3.9" fill="#e3dc17"/><rect x="845" y="332.0" width="1" height="17.0" fill="#e3dc17"/><rect x="843" y="340.8" width="5" height="3.1" fill="#e3dc17"/><rect x="853" y="319.7" width="1" height="20.1" fill="#e3dc17"/><rect x="851" y="335.1" width="5" height="3.1" fill="#e3dc17"/><rect x="860" y="325.4" width="1" height="25.4" fill="#ea4670"/><rect x="858" y="330.8" width="5" height="16.2" fill="#ea4670"/><rect x="868" y="345.0" width="1" height="15.9" fill="#ea4670"/><rect x="866" y="350.1" width="5" height="6.9" fill="#ea4670"/><rect x="876" y="339.8" width="1" height="11.4" fill="#e3dc17"/><rect x="874" y="343.1" width="5" height="7.7" fill="#e3dc17"/><rect x="883" y="330.8" width="1" height="16.2" fill="#e3dc17"/><rect x="881" y="338.2" width="5" height="6.8" fill="#e3dc17"/><rect x="891" y="332.0" width="1" height="11.9" fill="#ea4670"/><rect x="889" y="337.0" width="5" height="3.8" fill="#ea4670"/><rect x="899" y="337.0" width="1" height="21.9" fill="#ea4670"/><rect x="897" y="339.3" width="5" height="16.5" fill="#ea4670"/><rect x="906" y="345.9" width="1" height="10.8" fill="#e3dc17"/><rect x="904" y="352.4" width="5" height="2.3" fill="#e3dc17"/><rect x="914" y="352.4" width="1" height="11.5" fill="#e3dc17"/><rect x="912" y="352.4" width="5" height="1.2" fill="#e3dc17"/></g>
<g><rect x="5" y="527.5" width="2" height="37.3" fill="#f2541b"/><rect x="12" y="527.5" width="2" height="33.3" fill="#f2541b"/><rect x="20" y="527.5" width="2" height="26.5" fill="#f2541b"/><rect x="28" y="527.5" width="2" height="15.1" fill="#f2541b"/><rect x="35" y="527.5" width="2" height="11.1" fill="#f2541b"/><rect x="43" y="527.5" width="2" height="4.0" fill="#f2541b"/><rect x="51" y="527.5" width="2" height="1.0" fill="#f2541b"/><rect x="58" y="523.2" width="2" height="4.3" fill="#9677de"/><rect x="66" y="521.0" width="2" height="6.5" fill="#9677de"/><rect x="73" y="521.0" width="2" height="6.5" fill="#9677de"/><rect x="81" y="527.5" width="2" height="1.0" fill="#24d39a"/><rect x="89" y="527.5" width="2" height="10.2" fill="#24d39a"/><rect x="96" y="527.5" width="2" height="13.3" fill="#24d39a"/><rect x="104" y="527.5" width="2" height="15.1" fill="#24d39a"/><rect x="112" y="527.5" width="2" height="23.4" fill="#24d39a"/><rect x="119" y="527.5" width="2" height="27.1" fill="#24d39a"/><rect x="127" y="527.5" width="2" height="35.8" fill="#24d39a"/><rect x="134" y="527.5" width="2" height="41.0" fill="#24d39a"/><rect x="142" y="527.5" width="2" height="45.0" fill="#24d39a"/><rect x="150" y="527.5" width="2" height="40.4" fill="#f2541b"/><rect x="157" y="527.5" width="2" height="35.8" fill="#f2541b"/><rect x="165" y="527.5" width="2" height="30.5" fill="#f2541b"/><rect x="173" y="527.5" width="2" height="23.4" fill="#f2541b"/><rect x="180" y="527.5" width="2" height="19.4" fill="#f2541b"/><rect x="188" y="527.5" width="2" height="19.4" fill="#24d39a"/><rect x="196" y="527.5" width="2" height="23.4" fill="#24d39a"/><rect x="203" y="527.5" width="2" height="22.5" fill="#f2541b"/><rect x="211" y="527.5" width="2" height="21.9" fill="#f2541b"/><rect x="218" y="527.5" width="2" height="18.8" fill="#f2541b"/><rect x="226" y="527.5" width="2" height="14.2" fill="#f2541b"/><rect x="234" y="527.5" width="2" height="14.2" fill="#f2541b"/><rect x="241" y="527.5" width="2" height="9.6" fill="#f2541b"/><rect x="249" y="527.5" width="2" height="1.0" fill="#f2541b"/><rect x="257" y="522.6" width="2" height="4.9" fill="#9677de"/><rect x="264" y="522.6" width="2" height="4.9" fill="#9677de"/><rect x="272" y="527.5" width="2" height="3.4" fill="#24d39a"/><rect x="279" y="527.5" width="2" height="6.5" fill="#24d39a"/><rect x="287" y="527.5" width="2" height="7.1" fill="#24d39a"/><rect x="295" y="527.5" width="2" height="4.0" fill="#f2541b"/><rect x="302" y="527.5" width="2" height="3.4" fill="#f2541b"/><rect x="310" y="527.5" width="2" height="3.4" fill="#f2541b"/><rect x="318" y="527.5" width="2" height="1.2" fill="#f2541b"/><rect x="325" y="526.3" width="2" height="1.2" fill="#9677de"/><rect x="333" y="521.7" width="2" height="5.8" fill="#9677de"/><rect x="341" y="518.0" width="2" height="9.5" fill="#9677de"/><rect x="348" y="512.4" width="2" height="15.1" fill="#9677de"/><rect x="356" y="511.8" width="2" height="15.7" fill="#9677de"/><rect x="363" y="510.9" width="2" height="16.6" fill="#9677de"/><rect x="371" y="507.8" width="2" height="19.7" fill="#9677de"/><rect x="379" y="502.6" width="2" height="24.9" fill="#9677de"/><rect x="386" y="497.0" width="2" height="30.5" fill="#9677de"/><rect x="394" y="493.9" width="2" height="33.6" fill="#9677de"/><rect x="402" y="495.5" width="2" height="32.0" fill="#23d0cf"/><rect x="409" y="497.0" width="2" height="30.5" fill="#23d0cf"/><rect x="417" y="501.6" width="2" height="25.9" fill="#23d0cf"/><rect x="424" y="505.6" width="2" height="21.9" fill="#23d0cf"/><rect x="432" y="503.8" width="2" height="23.7" fill="#9677de"/><rect x="440" y="506.3" width="2" height="21.2" fill="#23d0cf"/><rect x="447" y="507.2" width="2" height="20.3" fill="#23d0cf"/><rect x="455" y="512.4" width="2" height="15.1" fill="#23d0cf"/><rect x="463" y="517.0" width="2" height="10.5" fill="#23d0cf"/><rect x="470" y="518.6" width="2" height="8.9" fill="#23d0cf"/><rect x="478" y="523.8" width="2" height="3.7" fill="#23d0cf"/><rect x="486" y="526.5" width="2" height="1.0" fill="#23d0cf"/><rect x="493" y="527.5" width="2" height="4.0" fill="#24d39a"/><rect x="501" y="527.5" width="2" height="11.1" fill="#24d39a"/><rect x="508" y="527.5" width="2" height="14.2" fill="#24d39a"/><rect x="516" y="527.5" width="2" height="12.0" fill="#f2541b"/><rect x="524" y="527.5" width="2" height="5.6" fill="#f2541b"/><rect x="531" y="527.5" width="2" height="5.6" fill="#24d39a"/><rect x="539" y="527.5" width="2" height="5.6" fill="#24d39a"/><rect x="547" y="527.5" width="2" height="6.5" fill="#24d39a"/><rect x="554" y="527.5" width="2" height="4.0" fill="#f2541b"/><rect x="562" y="527.5" width="2" height="1.9" fill="#f2541b"/><rect x="569" y="527.5" width="2" height="7.1" fill="#24d39a"/><rect x="577" y="527.5" width="2" height="10.2" fill="#24d39a"/><rect x="585" y="527.5" width="2" height="10.2" fill="#24d39a"/><rect x="592" y="527.5" width="2" height="11.1" fill="#24d39a"/><rect x="600" y="527.5" width="2" height="14.2" fill="#24d39a"/><rect x="608" y="527.5" width="2" height="17.3" fill="#24d39a"/><rect x="615" y="527.5" width="2" height="18.2" fill="#24d39a"/><rect x="623" y="527.5" width="2" height="14.2" fill="#f2541b"/><rect x="631" y="527.5" width="2" height="8.9" fill="#f2541b"/><rect x="638" y="527.5" width="2" height="1.0" fill="#f2541b"/><rect x="646" y="521.7" width="2" height="5.8" fill="#9677de"/><rect x="653" y="524.5" width="2" height="3.0" fill="#23d0cf"/><rect x="661" y="527.5" width="2" height="6.5" fill="#24d39a"/><rect x="669" y="527.5" width="2" height="10.2" fill="#24d39a"/><rect x="676" y="527.5" width="2" height="14.2" fill="#24d39a"/><rect x="684" y="527.5" width="2" height="13.3" fill="#f2541b"/><rect x="692" y="527.5" width="2" height="11.1" fill="#f2541b"/><rect x="699" y="527.5" width="2" height="11.1" fill="#f2541b"/><rect x="707" y="527.5" width="2" height="12.0" fill="#24d39a"/><rect x="714" y="527.5" width="2" height="15.1" fill="#24d39a"/><rect x="722" y="527.5" width="2" height="16.3" fill="#24d39a"/><rect x="730" y="527.5" width="2" height="17.3" fill="#24d39a"/><rect x="737" y="527.5" width="2" height="18.8" fill="#24d39a"/><rect x="745" y="527.5" width="2" height="16.3" fill="#f2541b"/><rect x="753" y="527.5" width="2" height="10.2" fill="#f2541b"/><rect x="760" y="527.5" width="2" height="6.5" fill="#f2541b"/><rect x="768" y="527.5" width="2" height="1.0" fill="#f2541b"/><rect x="776" y="527.5" width="2" height="1.0" fill="#24d39a"/><rect x="783" y="527.5" width="2" height="2.5" fill="#24d39a"/><rect x="791" y="527.5" width="2" height="2.5" fill="#24d39a"/><rect x="798" y="527.5" width="2" height="3.4" fill="#24d39a"/><rect x="806" y="527.5" width="2" height="5.6" fill="#24d39a"/><rect x="814" y="527.5" width="2" height="7.1" fill="#24d39a"/><rect x="821" y="527.5" width="2" height="9.6" fill="#24d39a"/><rect x="829" y="527.5" width="2" height="7.1" fill="#f2541b"/><rect x="837" y="527.5" width="2" height="4.3" fill="#f2541b"/><rect x="844" y="524.7" width="2" height="2.8" fill="#9677de"/><rect x="852" y="520.1" width="2" height="7.4" fill="#9677de"/><rect x="859" y="519.2" width="2" height="8.3" fill="#9677de"/><rect x="867" y="520.1" width="2" height="7.4" fill="#23d0cf"/><rect x="875" y="517.0" width="2" height="10.5" fill="#9677de"/><rect x="882" y="514.9" width="2" height="12.6" fill="#9677de"/><rect x="890" y="514.0" width="2" height="13.5" fill="#9677de"/><rect x="898" y="517.0" width="2" height="10.5" fill="#23d0cf"/><rect x="905" y="518.0" width="2" height="9.5" fill="#23d0cf"/><rect x="913" y="519.2" width="2" height="8.3" fill="#23d0cf"/></g>
<path d="M0.0 440.0 C2.6 442.6 9.8 451.0 15.4 455.4 C21.1 459.8 27.7 464.0 33.9 466.2 C40.1 468.4 45.2 468.9 52.4 468.7 C59.6 468.4 70.3 464.9 77.0 464.7 C83.7 464.5 87.3 465.9 92.4 467.7 C97.5 469.5 101.6 471.1 107.8 475.5 C114.0 479.9 123.2 487.2 129.4 493.9 C135.6 500.6 139.7 508.3 144.8 515.5 C149.9 522.7 154.5 531.2 160.2 537.1 C165.8 543.0 172.5 546.3 178.7 550.9 C184.9 555.5 191.0 559.9 197.2 564.8 C203.4 569.7 210.2 576.6 215.7 580.2 C221.2 583.8 225.6 584.6 230.0 586.4 C234.4 588.2 237.2 590.5 242.3 591.0 C247.4 591.5 255.2 589.4 260.8 589.4 C266.4 589.4 271.1 590.2 276.2 591.0 C281.3 591.8 286.0 593.3 291.6 594.1 C297.2 594.9 303.9 595.5 310.1 595.6 C316.3 595.8 322.4 596.0 328.6 595.0 C334.8 594.0 341.0 591.9 347.1 589.4 C353.2 586.9 359.9 583.5 365.5 580.2 C371.1 576.9 375.9 574.0 381.0 569.4 C386.1 564.8 391.3 557.9 396.4 552.5 C401.5 547.1 406.7 541.7 411.8 537.1 C416.9 532.5 421.6 528.8 427.2 524.7 C432.8 520.6 440.1 515.4 445.6 512.4 C451.1 509.4 455.6 508.5 460.0 506.9 C464.4 505.3 467.7 503.5 472.3 502.6 C476.9 501.7 483.1 501.2 487.7 501.6 C492.3 502.0 494.9 503.0 500.0 504.7 C505.1 506.4 511.8 509.9 518.5 511.8 C525.2 513.7 532.4 514.9 540.1 516.1 C547.8 517.3 556.5 517.5 564.7 519.2 C572.9 520.9 582.2 523.4 589.4 526.3 C596.6 529.2 602.2 533.5 607.9 536.4 C613.5 539.3 617.1 542.6 623.3 543.8 C629.4 545.0 638.1 543.3 644.8 543.8 C651.5 544.3 657.1 545.3 663.3 546.9 C669.5 548.5 677.3 551.7 681.8 553.1 C686.2 554.5 686.1 554.0 690.0 555.5 C693.9 557.0 699.8 559.5 705.4 562.3 C711.0 565.1 717.2 569.0 723.9 572.5 C730.6 576.0 738.8 580.7 745.5 583.3 C752.2 585.9 756.2 587.0 763.9 587.9 C771.6 588.8 783.5 588.0 791.7 588.8 C799.9 589.6 807.1 591.3 813.2 592.5 C819.4 593.7 824.0 595.2 828.6 596.2 C833.2 597.2 836.4 598.9 841.0 598.7 C845.6 598.5 850.8 596.5 856.4 595.0 C862.0 593.5 868.6 591.6 874.8 589.4 C880.9 587.2 886.7 584.0 893.3 581.7 C899.9 579.4 910.8 576.6 914.3 575.6" fill="none" stroke="#ae9a26" stroke-width="2" stroke-linejoin="round"/>
<path d="M0.0 477.9 C2.1 479.3 8.7 485.0 12.3 486.2 C15.9 487.4 18.5 486.6 21.6 485.3 C24.7 484.0 28.2 479.9 30.8 478.5 C33.4 477.1 34.4 478.1 37.0 477.0 C39.6 475.9 43.1 473.2 46.2 471.8 C49.3 470.4 52.4 470.4 55.5 468.7 C58.6 467.0 61.6 463.3 64.7 461.6 C67.8 459.9 71.1 457.7 73.9 458.5 C76.7 459.3 79.0 463.1 81.6 466.2 C84.2 469.3 85.4 473.1 89.3 477.0 C93.2 480.9 99.6 483.4 104.7 489.3 C109.8 495.2 116.0 505.5 120.1 512.4 C124.2 519.3 125.8 523.7 129.4 530.9 C133.0 538.1 138.1 549.3 141.7 555.5 C145.3 561.7 146.9 564.8 151.0 567.9 C155.1 571.0 161.8 573.0 166.4 574.0 C171.0 575.0 174.6 572.5 178.7 574.0 C182.8 575.5 186.9 579.7 191.0 583.3 C195.1 586.9 199.2 593.0 203.3 595.6 C207.4 598.2 211.6 597.9 215.7 598.7 C219.8 599.5 224.6 599.4 228.0 600.2 C231.4 601.0 233.8 603.5 236.2 603.3 C238.6 603.0 239.7 601.0 242.3 598.7 C244.9 596.4 248.8 591.5 251.6 589.4 C254.4 587.3 256.7 586.9 259.3 586.4 C261.9 585.9 264.2 585.3 267.0 586.4 C269.8 587.5 272.6 591.0 276.2 593.1 C279.8 595.2 284.9 598.6 288.5 599.3 C292.1 600.0 294.2 597.3 297.8 597.1 C301.4 596.9 306.0 598.4 310.1 598.1 C314.2 597.9 318.3 597.3 322.4 595.6 C326.5 593.9 330.6 591.0 334.7 587.9 C338.8 584.8 344.0 579.7 347.1 577.1 C350.2 574.5 350.1 574.5 353.2 572.5 C356.3 570.5 361.9 567.6 365.5 564.8 C369.1 562.0 371.7 559.6 374.8 555.5 C377.9 551.4 380.9 545.7 384.0 540.1 C387.1 534.5 390.2 526.1 393.3 521.7 C396.4 517.4 399.4 516.3 402.5 514.0 C405.6 511.7 407.7 509.1 411.8 507.8 C415.9 506.5 423.6 507.6 427.2 506.3 C430.8 505.0 429.7 502.7 433.3 500.1 C436.9 497.5 444.1 491.9 448.7 490.9 C453.3 489.9 457.1 493.6 461.0 494.2 C464.9 494.8 468.9 493.7 472.3 494.6 C475.7 495.5 478.5 498.0 481.6 499.5 C484.7 501.0 487.2 500.9 490.8 503.8 C494.4 506.7 499.8 513.8 503.1 517.0 C506.4 520.2 508.5 522.1 510.8 523.2 C513.1 524.3 514.7 524.7 517.0 523.8 C519.3 522.9 521.9 518.6 524.7 518.0 C527.5 517.4 529.8 519.4 533.9 520.1 C538.0 520.8 544.7 522.5 549.3 522.3 C553.9 522.0 558.1 517.7 561.7 518.6 C565.3 519.5 566.8 524.8 570.9 527.8 C575.0 530.8 581.2 533.3 586.3 536.4 C591.4 539.5 597.1 543.0 601.7 546.3 C606.3 549.6 610.4 554.2 614.0 556.2 C617.6 558.2 620.2 558.9 623.3 558.0 C626.4 557.1 628.6 554.0 632.5 550.9 C636.4 547.8 641.8 539.5 646.4 539.5 C651.0 539.5 655.3 546.9 660.2 550.9 C665.1 554.9 671.1 560.5 675.7 563.3 C680.3 566.1 684.1 566.9 688.0 567.9 C691.9 568.9 695.8 568.4 699.2 569.4 C702.6 570.4 705.4 572.0 708.5 574.0 C711.6 576.0 714.1 579.1 717.7 581.7 C721.3 584.3 726.4 586.8 730.0 589.4 C733.6 592.0 736.7 595.5 739.3 597.1 C741.9 598.8 742.9 599.5 745.5 599.3 C748.1 599.0 750.6 597.5 754.7 595.6 C758.8 593.7 764.5 589.0 770.1 587.9 C775.8 586.8 783.5 588.1 788.6 588.8 C793.7 589.5 796.8 590.2 800.9 591.9 C805.0 593.5 809.6 596.7 813.2 598.7 C816.8 600.8 818.4 603.7 822.5 604.2 C826.6 604.7 833.3 604.0 837.9 601.8 C842.5 599.6 846.1 593.9 850.2 591.0 C854.3 588.1 858.4 586.2 862.5 584.2 C866.6 582.2 870.2 581.1 874.8 578.7 C879.4 576.3 885.6 571.5 890.2 570.0 C894.8 568.5 898.6 569.9 902.6 569.4 C906.6 568.9 912.3 567.6 914.3 567.3" fill="none" stroke="#c6c6c6" stroke-width="2" stroke-linejoin="round"/>
<rect x="0" y="0" width="1021" height="1" fill="#2e2e2e"/>
<rect x="0" y="414" width="1021" height="1.2" fill="#c9c9c9"/>
<rect x="946" y="0" width="1.2" height="649" fill="#c9c9c9"/>
<rect x="0" y="622" width="1021" height="1.2" fill="#c9c9c9"/>
<rect x="0" y="0" width="2" height="649" fill="#0b0b0b"/>
<rect x="0" y="5" width="1.5" height="37" fill="#1d6a26"/>
<g fill="#8a8a8a"><rect x="0" y="58.5" width="1.5" height="2"/><rect x="0" y="61.5" width="1.5" height="2"/><rect x="0" y="64.5" width="1.5" height="2"/><rect x="0" y="95" width="1.5" height="2"/><rect x="0" y="98" width="1.5" height="2"/><rect x="0" y="101" width="1.5" height="2"/><rect x="0" y="134.6" width="1.5" height="2"/><rect x="0" y="138" width="1.5" height="2"/><rect x="0" y="170" width="1.5" height="2"/><rect x="0" y="174" width="1.5" height="2"/><rect x="0" y="207" width="1.5" height="2"/><rect x="0" y="211" width="1.5" height="2"/><rect x="0" y="406" width="1.5" height="3"/><rect x="0" y="438.5" width="1.5" height="7"/><rect x="0" y="459" width="1.5" height="2"/><rect x="0" y="463" width="1.5" height="2"/><rect x="0" y="563" width="1.5" height="2"/><rect x="0" y="577" width="1.5" height="2"/><rect x="0" y="581" width="1.5" height="2"/><rect x="0" y="596" width="1.5" height="2"/><rect x="0" y="601" width="1.5" height="2"/><rect x="0" y="615" width="1.5" height="2"/><rect x="0" y="634" width="1.5" height="2"/><rect x="0" y="639" width="1.5" height="2"/></g>
<text x="11.2" y="19.7" font-family="Liberation Sans, sans-serif" font-size="12" fill="#cdcdcd" stroke="#cdcdcd" stroke-width="0.35">FCPOc3</text><text x="62.4" y="19.7" font-family="Liberation Sans, sans-serif" font-size="12" fill="#cdcdcd" text-anchor="middle">·</text><text x="69.5" y="19.7" font-family="Liberation Sans, sans-serif" font-size="12" fill="#cdcdcd" stroke="#cdcdcd" stroke-width="0.35">1</text><path transform="translate(76 10) scale(1.0)" d="M2.5 2.5H9.5 M1 6.2H11 M6 1V6.2 Q5 9.5 1.5 11.5 M6 6.2 Q7.5 9.5 11 11.5" fill="none" stroke="#cdcdcd" stroke-width="1.30" stroke-linecap="butt"/><text x="93.7" y="19.7" font-family="Liberation Sans, sans-serif" font-size="12" fill="#cdcdcd" text-anchor="middle">·</text><text x="99.9" y="19.7" font-family="Liberation Sans, sans-serif" font-size="12" fill="#cdcdcd" stroke="#cdcdcd" stroke-width="0.35">MDX</text><text x="132.4" y="19.7" font-family="Liberation Sans, sans-serif" font-size="12" fill="#cdcdcd" text-anchor="middle">·</text><text x="139.4" y="19.7" font-family="Liberation Sans, sans-serif" font-size="12" fill="#cdcdcd" stroke="#cdcdcd" stroke-width="0.35" textLength="60.4" lengthAdjust="spacingAndGlyphs">Trade Price</text><path transform="translate(208 10) scale(1.0)" d="M1.5 2H10.5 M1 6.5H11 M4.3 2V7 Q4 9.5 2 11.5 M8.2 2V11.5" fill="none" stroke="#cdcdcd" stroke-width="1.10" stroke-linecap="butt"/><text x="220" y="19.7" font-family="Liberation Sans, sans-serif" font-size="12"><tspan fill="#cdcdcd">=</tspan><tspan fill="#d4ce2c">3837</tspan></text><path transform="translate(261 10) scale(1.0)" d="M6 0.3V1.8 M1 2.2H11 M3.5 3.6H8.5V5.6H3.5Z M1.8 11.5V7H10.2V11.5 M4 8.3H8V10.2H4Z" fill="none" stroke="#cdcdcd" stroke-width="1.10" stroke-linecap="butt"/><text x="273" y="19.7" font-family="Liberation Sans, sans-serif" font-size="12"><tspan fill="#cdcdcd">=</tspan><tspan fill="#d4ce2c">3837</tspan></text><path transform="translate(314 10) scale(1.0)" d="M4 0.6 Q3 3.5 1 5.5 M2.6 3.8V11.5 M5.4 2 Q8 1.8 10.6 0.8 M5.4 2V9.6 L8 8.8 M5.4 5.4H11 M7.6 2 Q8 8 11.2 11.2 M7.3 10.8H9" fill="none" stroke="#cdcdcd" stroke-width="1.10" stroke-linecap="butt"/><text x="326" y="19.7" font-family="Liberation Sans, sans-serif" font-size="12"><tspan fill="#cdcdcd">=</tspan><tspan fill="#d4ce2c">3774</tspan></text><path transform="translate(366 10) scale(1.0)" d="M1.5 3.2V8.3 L4.8 6.6 M4.2 0.8V11.6 M7 0.6 Q6.5 3 5.4 4.6 M6.3 3.2H11 M10 3.2 Q9 8.5 5.4 11.6 M6.6 5.6 Q8 9.5 11.2 11.6" fill="none" stroke="#cdcdcd" stroke-width="1.10" stroke-linecap="butt"/><text x="378.5" y="19.7" font-family="Liberation Sans, sans-serif" font-size="12"><tspan fill="#cdcdcd">=</tspan><tspan fill="#d4ce2c">3829</tspan></text><text x="418.6" y="19.7" font-family="Liberation Sans, sans-serif" font-size="12" fill="#d4ce2c">2 (+0.05%)</text><rect x="12.5" y="33.5" width="27" height="19" rx="2.5" fill="#1b1b1b" stroke="#3c3c3c" stroke-width="1"/><path d="M27.5 39.5 L24.5 43 L27.5 46.5" fill="none" stroke="#e0e0e0" stroke-width="1.5"/><text x="11.2" y="66.8" font-family="Liberation Sans, sans-serif" font-size="12" fill="#cdcdcd" stroke="#cdcdcd" stroke-width="0.35">BB 20 2</text><text x="62.6" y="66.8" font-family="Liberation Sans, sans-serif" font-size="12" fill="#c92a5e">3,868.9000</text><text x="129" y="66.8" font-family="Liberation Sans, sans-serif" font-size="12" fill="#9c9c9c">4,011.4874</text><text x="194" y="66.8" font-family="Liberation Sans, sans-serif" font-size="12" fill="#3aa6df">3,726.3126</text><text x="11.5" y="435.1" font-family="Liberation Sans, sans-serif" font-size="12" fill="#cdcdcd" stroke="#cdcdcd" stroke-width="0.2">MACD 12 26 close 9 EMA EMA</text><text x="188.4" y="435.1" font-family="Liberation Sans, sans-serif" font-size="12" fill="#1fb9c6">14.2599</text><text x="236.8" y="435.1" font-family="Liberation Sans, sans-serif" font-size="12" fill="#f0f0f0">−68.3571</text><text x="293.2" y="435.1" font-family="Liberation Sans, sans-serif" font-size="12" fill="#e2ad24">−82.6170</text><text x="954.2" y="84.0" font-family="Liberation Sans, sans-serif" font-size="12" fill="#d0d0d0" stroke="#d0d0d0" stroke-width="0.3" textLength="25" lengthAdjust="spacingAndGlyphs">5200</text><text x="954.2" y="123.9" font-family="Liberation Sans, sans-serif" font-size="12" fill="#d0d0d0" stroke="#d0d0d0" stroke-width="0.3" textLength="25" lengthAdjust="spacingAndGlyphs">5000</text><text x="954.2" y="163.7" font-family="Liberation Sans, sans-serif" font-size="12" fill="#d0d0d0" stroke="#d0d0d0" stroke-width="0.3" textLength="25" lengthAdjust="spacingAndGlyphs">4800</text><text x="954.2" y="203.5" font-family="Liberation Sans, sans-serif" font-size="12" fill="#d0d0d0" stroke="#d0d0d0" stroke-width="0.3" textLength="25" lengthAdjust="spacingAndGlyphs">4600</text><text x="954.2" y="243.3" font-family="Liberation Sans, sans-serif" font-size="12" fill="#d0d0d0" stroke="#d0d0d0" stroke-width="0.3" textLength="25" lengthAdjust="spacingAndGlyphs">4400</text><text x="954.2" y="283.1" font-family="Liberation Sans, sans-serif" font-size="12" fill="#d0d0d0" stroke="#d0d0d0" stroke-width="0.3" textLength="25" lengthAdjust="spacingAndGlyphs">4200</text><text x="954.2" y="362.7" font-family="Liberation Sans, sans-serif" font-size="12" fill="#d0d0d0" stroke="#d0d0d0" stroke-width="0.3" textLength="25" lengthAdjust="spacingAndGlyphs">3800</text><text x="954.2" y="402.5" font-family="Liberation Sans, sans-serif" font-size="12" fill="#d0d0d0" stroke="#d0d0d0" stroke-width="0.3" textLength="25" lengthAdjust="spacingAndGlyphs">3600</text><text x="954.4" y="471.3" font-family="Liberation Sans, sans-serif" font-size="12" fill="#d0d0d0" stroke="#d0d0d0" stroke-width="0.3" textLength="48" lengthAdjust="spacingAndGlyphs">100.0000</text><text x="954.4" y="531.3" font-family="Liberation Sans, sans-serif" font-size="12" fill="#d0d0d0" stroke="#d0d0d0" stroke-width="0.3" textLength="36" lengthAdjust="spacingAndGlyphs">0.0000</text><path d="M947 309 H1017 Q1019 309 1019 311 V323.7 Q1019 325.7 1017 325.7 H947 Z" fill="#9b9b9b"/><text x="954" y="321.7" font-family="Liberation Sans, sans-serif" font-size="12" fill="#1a1a1a">4,011.4874</text><path d="M947 327.7 H1017 Q1019 327.7 1019 329.7 V342.7 Q1019 344.7 1017 344.7 H947 Z" fill="#e2306b"/><text x="954" y="340.5" font-family="Liberation Sans, sans-serif" font-size="12" fill="#ffffff">3,868.9000</text><path d="M947 345 H982.7 Q984.7 345 984.7 347 V359.7 Q984.7 361.7 982.7 361.7 H947 Z" fill="#d6d21e"/><text x="954" y="357.7" font-family="Liberation Sans, sans-serif" font-size="12" fill="#1a1a1a">3829</text><path d="M947 366.3 H1017 Q1019 366.3 1019 368.3 V381.2 Q1019 383.2 1017 383.2 H947 Z" fill="#2eb0ee"/><text x="954" y="379.1" font-family="Liberation Sans, sans-serif" font-size="12" fill="#1a1a1a">3,726.3126</text><path d="M947 511.3 H1000 Q1002 511.3 1002 513.3 V525.5 Q1002 527.5 1000 527.5 H947 Z" fill="#1fc6d0"/><text x="954" y="523.7" font-family="Liberation Sans, sans-serif" font-size="12" fill="#1a1a1a">14.2599</text><path d="M947 560.6 H1005.8 Q1007.8 560.6 1007.8 562.6 V574.9 Q1007.8 576.9 1005.8 576.9 H947 Z" fill="#ffffff"/><text x="954" y="573.0" font-family="Liberation Sans, sans-serif" font-size="12" fill="#1a1a1a">−68.3571</text><path d="M947 577 H1005.8 Q1007.8 577 1007.8 579 V592 Q1007.8 594 1005.8 594 H947 Z" fill="#f2b400"/><text x="954" y="589.8" font-family="Liberation Sans, sans-serif" font-size="12" fill="#1a1a1a">−82.6170</text><rect x="950.5" y="4.5" width="69" height="49" rx="4" fill="none" stroke="#3e3e3e" stroke-width="1"/><text x="954.3" y="21.1" font-family="Liberation Sans, sans-serif" font-size="12" fill="#e6e6e6">MYR</text><text x="954.3" y="45.3" font-family="Liberation Sans, sans-serif" font-size="12" fill="#e6e6e6">t</text><path d="M1010.3 15.8 L1012.6 18.2 L1014.9 15.8" fill="none" stroke="#e6e6e6" stroke-width="1.2"/><path d="M1010.3 39.8 L1012.6 42.2 L1014.9 39.8" fill="none" stroke="#e6e6e6" stroke-width="1.2"/><text x="23.8" y="640.3" font-family="Liberation Sans, sans-serif" font-weight="bold" font-size="12" fill="#d0d0d0">12</text><path transform="translate(37.47 630.3) scale(0.9583333333333334)" d="M3.2 1V7.5 Q3 10 1.2 11.6 M3.2 1H10V11.6 L8.6 11.2 M3.2 4.4H10 M3.2 7.6H10" fill="none" stroke="#d0d0d0" stroke-width="1.57" stroke-linecap="butt"/><text x="196.4" y="640.3" font-family="Liberation Sans, sans-serif" font-weight="bold" font-size="12" fill="#d0d0d0" text-anchor="middle">2025</text><text x="338.7" y="640.3" font-family="Liberation Sans, sans-serif" font-weight="bold" font-size="12" fill="#d0d0d0">2</text><path transform="translate(345.63500000000005 630.3) scale(0.9583333333333334)" d="M3.2 1V7.5 Q3 10 1.2 11.6 M3.2 1H10V11.6 L8.6 11.2 M3.2 4.4H10 M3.2 7.6H10" fill="none" stroke="#d0d0d0" stroke-width="1.57" stroke-linecap="butt"/><text x="484.5" y="640.3" font-family="Liberation Sans, sans-serif" font-weight="bold" font-size="12" fill="#d0d0d0">3</text><path transform="translate(491.43500000000006 630.3) scale(0.9583333333333334)" d="M3.2 1V7.5 Q3 10 1.2 11.6 M3.2 1H10V11.6 L8.6 11.2 M3.2 4.4H10 M3.2 7.6H10" fill="none" stroke="#d0d0d0" stroke-width="1.57" stroke-linecap="butt"/><text x="630.0" y="640.3" font-family="Liberation Sans, sans-serif" font-weight="bold" font-size="12" fill="#d0d0d0">4</text><path transform="translate(636.9349999999998 630.3) scale(0.9583333333333334)" d="M3.2 1V7.5 Q3 10 1.2 11.6 M3.2 1H10V11.6 L8.6 11.2 M3.2 4.4H10 M3.2 7.6H10" fill="none" stroke="#d0d0d0" stroke-width="1.57" stroke-linecap="butt"/><text x="789.7" y="640.3" font-family="Liberation Sans, sans-serif" font-weight="bold" font-size="12" fill="#d0d0d0">5</text><path transform="translate(796.6349999999999 630.3) scale(0.9583333333333334)" d="M3.2 1V7.5 Q3 10 1.2 11.6 M3.2 1H10V11.6 L8.6 11.2 M3.2 4.4H10 M3.2 7.6H10" fill="none" stroke="#d0d0d0" stroke-width="1.57" stroke-linecap="butt"/><text x="892.8" y="623.6" font-family="Liberation Sans, sans-serif" font-size="31.5" fill="#e9f1fb" letter-spacing="1.15" stroke="#3a2410" stroke-width="0.6" paint-order="stroke">FX678</text><path d="M978.5 636.7 L982.1 630.5 L989.3 630.5 L992.9 636.7 L989.3 642.9 L982.1 642.9 Z" fill="none" stroke="#d0d0d0" stroke-width="1.1"/><circle cx="985.7" cy="636.7" r="2.2" fill="none" stroke="#d0d0d0" stroke-width="1.1"/>
</svg>
</body></html>
